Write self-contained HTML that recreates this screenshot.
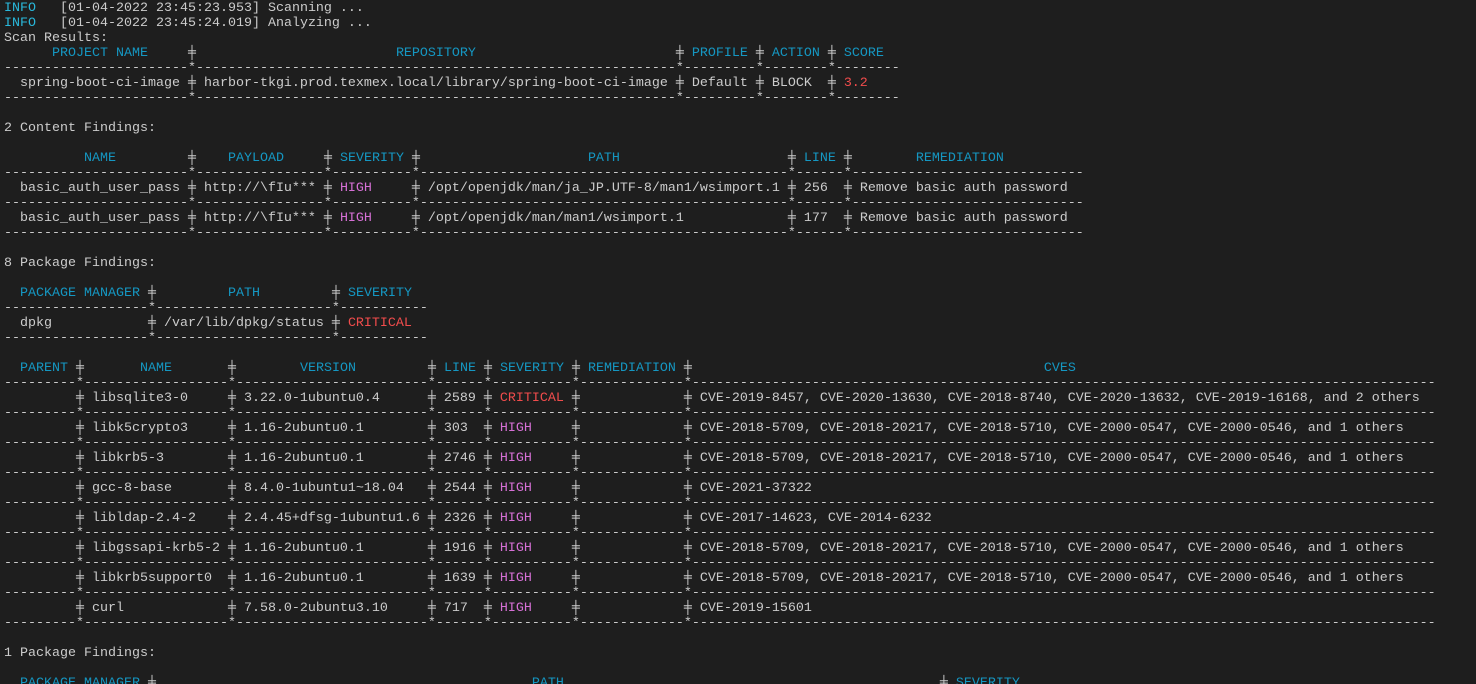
<!DOCTYPE html>
<html><head><meta charset="utf-8"><style>
html,body{margin:0;padding:0;background:#1e1e1e;width:1476px;height:684px;overflow:hidden}
pre{margin:0;padding:1px 0 0 4px;font-family:"Liberation Mono","DejaVu Sans Mono",monospace;font-size:13.33px;line-height:15px;color:#cccccc;white-space:pre}
.i{color:#29b8db}.h{color:#1597c2}.r{color:#f14c4c}.m{color:#d670d6}
</style></head><body><pre><span class="i">INFO</span>   [01-04-2022 23:45:23.953] Scanning ...
<span class="i">INFO</span>   [01-04-2022 23:45:24.019] Analyzing ...
Scan Results:
      <span class="h">PROJECT NAME</span>     ╪                         <span class="h">REPOSITORY</span>                         ╪ <span class="h">PROFILE</span> ╪ <span class="h">ACTION</span> ╪ <span class="h">SCORE</span>
-----------------------*------------------------------------------------------------*---------*--------*--------
  spring-boot-ci-image ╪ harbor-tkgi.prod.texmex.local/library/spring-boot-ci-image ╪ Default ╪ BLOCK  ╪ <span class="r">3.2</span>
-----------------------*------------------------------------------------------------*---------*--------*--------

2 Content Findings:

          <span class="h">NAME</span>         ╪    <span class="h">PAYLOAD</span>     ╪ <span class="h">SEVERITY</span> ╪                     <span class="h">PATH</span>                     ╪ <span class="h">LINE</span> ╪        <span class="h">REMEDIATION</span>
-----------------------*----------------*----------*----------------------------------------------*------*-----------------------------
  basic_auth_user_pass ╪ http://\fIu*** ╪ <span class="m">HIGH</span>     ╪ /opt/openjdk/man/ja_JP.UTF-8/man1/wsimport.1 ╪ 256  ╪ Remove basic auth password
-----------------------*----------------*----------*----------------------------------------------*------*-----------------------------
  basic_auth_user_pass ╪ http://\fIu*** ╪ <span class="m">HIGH</span>     ╪ /opt/openjdk/man/man1/wsimport.1             ╪ 177  ╪ Remove basic auth password
-----------------------*----------------*----------*----------------------------------------------*------*-----------------------------

8 Package Findings:

  <span class="h">PACKAGE MANAGER</span> ╪         <span class="h">PATH</span>         ╪ <span class="h">SEVERITY</span>
------------------*----------------------*-----------
  dpkg            ╪ /var/lib/dpkg/status ╪ <span class="r">CRITICAL</span>
------------------*----------------------*-----------

  <span class="h">PARENT</span> ╪       <span class="h">NAME</span>       ╪        <span class="h">VERSION</span>         ╪ <span class="h">LINE</span> ╪ <span class="h">SEVERITY</span> ╪ <span class="h">REMEDIATION</span> ╪                                            <span class="h">CVES</span>
---------*------------------*------------------------*------*----------*-------------*---------------------------------------------------------------------------------------------
         ╪ libsqlite3-0     ╪ 3.22.0-1ubuntu0.4      ╪ 2589 ╪ <span class="r">CRITICAL</span> ╪             ╪ CVE-2019-8457, CVE-2020-13630, CVE-2018-8740, CVE-2020-13632, CVE-2019-16168, and 2 others
---------*------------------*------------------------*------*----------*-------------*---------------------------------------------------------------------------------------------
         ╪ libk5crypto3     ╪ 1.16-2ubuntu0.1        ╪ 303  ╪ <span class="m">HIGH</span>     ╪             ╪ CVE-2018-5709, CVE-2018-20217, CVE-2018-5710, CVE-2000-0547, CVE-2000-0546, and 1 others
---------*------------------*------------------------*------*----------*-------------*---------------------------------------------------------------------------------------------
         ╪ libkrb5-3        ╪ 1.16-2ubuntu0.1        ╪ 2746 ╪ <span class="m">HIGH</span>     ╪             ╪ CVE-2018-5709, CVE-2018-20217, CVE-2018-5710, CVE-2000-0547, CVE-2000-0546, and 1 others
---------*------------------*------------------------*------*----------*-------------*---------------------------------------------------------------------------------------------
         ╪ gcc-8-base       ╪ 8.4.0-1ubuntu1~18.04   ╪ 2544 ╪ <span class="m">HIGH</span>     ╪             ╪ CVE-2021-37322
---------*------------------*------------------------*------*----------*-------------*---------------------------------------------------------------------------------------------
         ╪ libldap-2.4-2    ╪ 2.4.45+dfsg-1ubuntu1.6 ╪ 2326 ╪ <span class="m">HIGH</span>     ╪             ╪ CVE-2017-14623, CVE-2014-6232
---------*------------------*------------------------*------*----------*-------------*---------------------------------------------------------------------------------------------
         ╪ libgssapi-krb5-2 ╪ 1.16-2ubuntu0.1        ╪ 1916 ╪ <span class="m">HIGH</span>     ╪             ╪ CVE-2018-5709, CVE-2018-20217, CVE-2018-5710, CVE-2000-0547, CVE-2000-0546, and 1 others
---------*------------------*------------------------*------*----------*-------------*---------------------------------------------------------------------------------------------
         ╪ libkrb5support0  ╪ 1.16-2ubuntu0.1        ╪ 1639 ╪ <span class="m">HIGH</span>     ╪             ╪ CVE-2018-5709, CVE-2018-20217, CVE-2018-5710, CVE-2000-0547, CVE-2000-0546, and 1 others
---------*------------------*------------------------*------*----------*-------------*---------------------------------------------------------------------------------------------
         ╪ curl             ╪ 7.58.0-2ubuntu3.10     ╪ 717  ╪ <span class="m">HIGH</span>     ╪             ╪ CVE-2019-15601
---------*------------------*------------------------*------*----------*-------------*---------------------------------------------------------------------------------------------

1 Package Findings:

  <span class="h">PACKAGE MANAGER</span> ╪                                               <span class="h">PATH</span>                                               ╪ <span class="h">SEVERITY</span>
</pre></body></html>
